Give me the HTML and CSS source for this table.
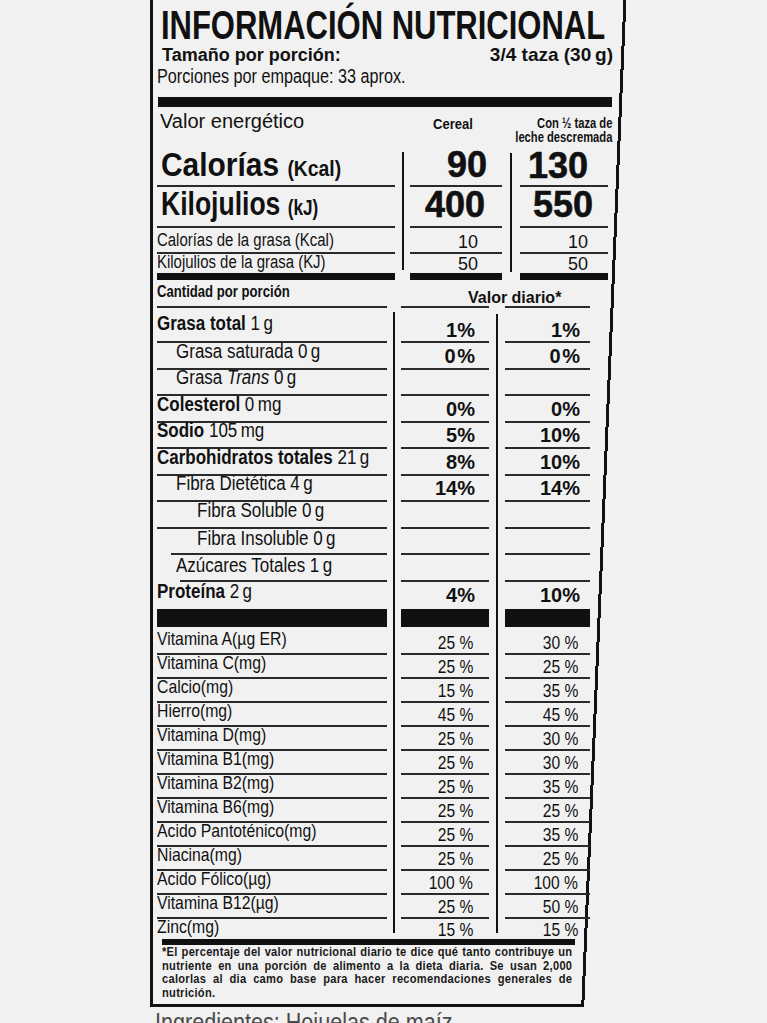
FILE: index.html
```html
<!DOCTYPE html>
<html lang="es">
<head>
<meta charset="utf-8">
<title>Información nutricional</title>
<link rel="stylesheet" href="styles.css">
</head>
<body>
<div class="label">
  <header class="head">
    <h1 class="title">INFORMACIÓN NUTRICIONAL</h1>
    <div class="serving"><span>Tamaño por porción:</span><span>3/4 taza (30&#8201;g)</span></div>
    <div class="servings"><span class="t">Porciones por empaque: 33 aprox.</span></div>
    <div class="bar"></div>
  </header>

  <section class="energy">
    <div class="eh-label">Valor energético</div>
    <div class="eh-c1"><span class="t">Cereal</span></div>
    <div class="eh-c2"><span class="t tr">Con ½ taza de<br>leche descremada</span></div>
    <span class="sep s1"></span>
    <span class="sep s2"></span>

    <div class="c l r-cal"><span class="t">Calorías&nbsp;<small>(Kcal)</small></span></div>
    <div class="c v1 r-cal num">90</div>
    <div class="c v2 r-cal num">130</div>

    <div class="c l r-kj"><span class="t">Kilojulios&nbsp;<small>(kJ)</small></span></div>
    <div class="c v1 r-kj num">400</div>
    <div class="c v2 r-kj num">550</div>

    <div class="c l r-cg"><span class="t">Calorías de la grasa (Kcal)</span></div>
    <div class="c v1 r-cg sm">10</div>
    <div class="c v2 r-cg sm">10</div>

    <div class="c l r-kg"><span class="t">Kilojulios de la grasa (KJ)</span></div>
    <div class="c v1 r-kg sm">50</div>
    <div class="c v2 r-kg sm">50</div>
  </section>

  <section class="nutrients">
    <span class="sep s1"></span>
    <span class="sep s2"></span>

    <div class="c l hd"><span class="t">Cantidad por porción</span></div>
    <div class="c v1 hd dv"><span>Valor diario*</span></div>
    <div class="c v2 hd"></div>

    <div class="c l nu first"><span class="t"><b>Grasa total</b> 1&#8201;g</span></div>
    <div class="c v1 nu pct first">1%</div>
    <div class="c v2 nu pct first">1%</div>

    <div class="c l nu in1"><span class="t">Grasa saturada 0&#8201;g</span></div>
    <div class="c v1 nu pct">0&#8202;%</div>
    <div class="c v2 nu pct">0&#8202;%</div>

    <div class="c l nu in1"><span class="t">Grasa <i>Trans</i> 0&#8201;g</span></div>
    <div class="c v1 nu pct"></div>
    <div class="c v2 nu pct"></div>

    <div class="c l nu"><span class="t"><b>Colesterol</b> 0&#8201;mg</span></div>
    <div class="c v1 nu pct">0%</div>
    <div class="c v2 nu pct">0%</div>

    <div class="c l nu"><span class="t"><b>Sodio</b> 105&#8201;mg</span></div>
    <div class="c v1 nu pct">5%</div>
    <div class="c v2 nu pct">10%</div>

    <div class="c l nu"><span class="t"><b>Carbohidratos totales</b> 21&#8201;g</span></div>
    <div class="c v1 nu pct">8%</div>
    <div class="c v2 nu pct">10%</div>

    <div class="c l nu in1"><span class="t">Fibra Dietética 4&#8201;g</span></div>
    <div class="c v1 nu pct">14%</div>
    <div class="c v2 nu pct">14%</div>

    <div class="c l nu in2"><span class="t">Fibra Soluble 0&#8201;g</span></div>
    <div class="c v1 nu pct"></div>
    <div class="c v2 nu pct"></div>

    <div class="c l nu in2 ln-short"><span class="t">Fibra Insoluble 0&#8201;g</span></div>
    <div class="c v1 nu pct"></div>
    <div class="c v2 nu pct"></div>

    <div class="c l nu in1 ln-short2"><span class="t">Azúcares Totales 1&#8201;g</span></div>
    <div class="c v1 nu pct"></div>
    <div class="c v2 nu pct"></div>

    <div class="c l nu prot"><span class="t"><b>Proteína</b> 2&#8201;g</span></div>
    <div class="c v1 nu pct prot">4%</div>
    <div class="c v2 nu pct prot">10%</div>

    <div class="c l vi"><span class="t">Vitamina A(µg ER)</span></div>
    <div class="c v1 vi vp"><span class="t tr">25 %</span></div>
    <div class="c v2 vi vp"><span class="t tr">30 %</span></div>

    <div class="c l vi"><span class="t">Vitamina C(mg)</span></div>
    <div class="c v1 vi vp"><span class="t tr">25 %</span></div>
    <div class="c v2 vi vp"><span class="t tr">25 %</span></div>

    <div class="c l vi"><span class="t">Calcio(mg)</span></div>
    <div class="c v1 vi vp"><span class="t tr">15 %</span></div>
    <div class="c v2 vi vp"><span class="t tr">35 %</span></div>

    <div class="c l vi"><span class="t">Hierro(mg)</span></div>
    <div class="c v1 vi vp"><span class="t tr">45 %</span></div>
    <div class="c v2 vi vp"><span class="t tr">45 %</span></div>

    <div class="c l vi"><span class="t">Vitamina D(mg)</span></div>
    <div class="c v1 vi vp"><span class="t tr">25 %</span></div>
    <div class="c v2 vi vp"><span class="t tr">30 %</span></div>

    <div class="c l vi"><span class="t">Vitamina B1(mg)</span></div>
    <div class="c v1 vi vp"><span class="t tr">25 %</span></div>
    <div class="c v2 vi vp"><span class="t tr">30 %</span></div>

    <div class="c l vi"><span class="t">Vitamina B2(mg)</span></div>
    <div class="c v1 vi vp"><span class="t tr">25 %</span></div>
    <div class="c v2 vi vp"><span class="t tr">35 %</span></div>

    <div class="c l vi"><span class="t">Vitamina B6(mg)</span></div>
    <div class="c v1 vi vp"><span class="t tr">25 %</span></div>
    <div class="c v2 vi vp"><span class="t tr">25 %</span></div>

    <div class="c l vi"><span class="t">Acido Pantoténico(mg)</span></div>
    <div class="c v1 vi vp"><span class="t tr">25 %</span></div>
    <div class="c v2 vi vp"><span class="t tr">35 %</span></div>

    <div class="c l vi"><span class="t">Niacina(mg)</span></div>
    <div class="c v1 vi vp"><span class="t tr">25 %</span></div>
    <div class="c v2 vi vp"><span class="t tr">25 %</span></div>

    <div class="c l vi"><span class="t">Ácido Fólico(µg)</span></div>
    <div class="c v1 vi vp"><span class="t tr">100 %</span></div>
    <div class="c v2 vi vp"><span class="t tr">100 %</span></div>

    <div class="c l vi"><span class="t">Vitamina B12(µg)</span></div>
    <div class="c v1 vi vp"><span class="t tr">25 %</span></div>
    <div class="c v2 vi vp"><span class="t tr">50 %</span></div>

    <div class="c l vi last"><span class="t">Zinc(mg)</span></div>
    <div class="c v1 vi vp last"><span class="t tr">15 %</span></div>
    <div class="c v2 vi vp last"><span class="t tr">15 %</span></div>
  </section>

  <div class="bar-foot"></div>
  <p class="foot">*El percentaje del valor nutricional diario te dice qué tanto contribuye un nutriente en una porción de alimento a la dieta diaria. Se usan 2,000 calorlas al dia camo base para hacer recomendaciones generales de nutrición.</p>
  <div class="rule-bottom"></div>
</div>
<div class="ingredients"><span class="t">Ingredientes: Hojuelas de maíz</span></div>
</body>
</html>
```

FILE: styles.css
```css
* { box-sizing: border-box; margin: 0; padding: 0; }

html, body { background: #f1f1f1; }

body {
  margin: 0;
  color: #111;
  font-family: "Liberation Sans", Arial, sans-serif;
  overflow: hidden;
}

/* condensed text: Helvetica-condensed look from Liberation Sans */
.t {
  display: inline-block;
  transform-origin: 0 100%;
  transform: scaleX(var(--sx, 0.84));
}
.t.tr { transform-origin: 100% 100%; text-align: right; }

.label {
  margin-left: 150px;
  width: 482px;
  border-left: 3px solid #111;
  padding: 5px 0 0 4px;
  background-image: linear-gradient(92.4deg, transparent 470px, #111 470px, #111 473px, transparent 473px);
}

/* ---------- header ---------- */
.head { width: 456px; }

.title {
  font-weight: 700;
  font-size: 40px;
  line-height: 40px;
  padding-left: 5px;
  white-space: nowrap;
  transform-origin: 0 100%;
  transform: scaleX(0.775);
}

.serving {
  display: flex;
  justify-content: space-between;
  font-weight: 700;
  font-size: 18px;
  line-height: 20px;
  padding-left: 5px;
}
.serving span:last-child { font-size: 19px; }

.servings {
  font-size: 20px;
  line-height: 22px;
  white-space: nowrap;
  --sx: 0.81;
}

.bar {
  margin: 10px 0 0 1px;
  width: 454px;
  height: 10px;
  background: #111;
}

/* ---------- energy grid ---------- */
.energy {
  display: grid;
  width: 451px;
  grid-template-columns: 238px 15px 92px 18px 88px;
  grid-template-rows: 38px 42px 41px 26px 26px;
}

.sep {
  width: 2px;
  background: #111;
  justify-self: center;
}
.energy .s1 { grid-column: 2; grid-row: 2 / 6; margin: 7px 0 10px; }
.energy .s2 { grid-column: 4; grid-row: 2 / 6; margin: 8px 0 8px; }

.eh-label {
  grid-column: 1;
  font-size: 20px;
  line-height: 22px;
  padding: 3px 0 0 3px;
}
.eh-c1 {
  grid-column: 3;
  font-weight: 700;
  font-size: 15px;
  line-height: 16px;
  padding: 9px 0 0 23px;
  --sx: 0.87;
}
.eh-c2 {
  grid-column: 5;
  display: flex;
  justify-content: flex-end;
  align-items: flex-start;
  font-weight: 700;
  font-size: 14px;
  line-height: 14px;
  padding-top: 9px;
  margin-right: -4px;
  white-space: nowrap;
  --sx: 0.8;
}

.c {
  display: flex;
  align-items: flex-end;
  border-bottom: 2px solid #2a2a2a;
  white-space: nowrap;
}
.l { grid-column: 1; }
.v1 { grid-column: 3; justify-content: flex-end; }
.v2 { grid-column: 5; justify-content: flex-end; }

.r-cal, .r-kj {
  font-weight: 700;
  font-size: 34px;
  line-height: 34px;
}
.r-cal small, .r-kj small {
  font-size: 22px;
  line-height: 22px;
}
.r-cal.l { padding: 0 0 4px 4px; --sx: 0.88; }
.r-kj.l { padding: 0 0 6px 4px; --sx: 0.78; }

.num {
  font-size: 36px;
  line-height: 36px;
  -webkit-text-stroke: 0.6px #111;
}
.r-cal.v1 { padding: 0 15px 2px 0; }
.r-cal.v2 { padding: 0 20px 1px 0; }
.r-kj.v1 { padding: 0 17px 3px 0; }
.r-kj.v2 { padding: 0 15px 3px 0; }

.r-cg, .r-kg {
  font-size: 18px;
  line-height: 18px;
}
.r-cg.l { padding-bottom: 3px; --sx: 0.83; }
.r-kg.l { padding-bottom: 2px; --sx: 0.83; }
.r-kg { border-bottom-width: 7px; border-bottom-color: #111; }
.r-cg.v1 { padding: 0 24px 1px 0; }
.r-cg.v2 { padding: 0 20px 1px 0; }
.r-kg.v1 { padding: 0 24px 0 0; }
.r-kg.v2 { padding: 0 20px 0 0; }

/* ---------- nutrients grid ---------- */
.nutrients {
  display: grid;
  width: 433px;
  grid-template-columns: 230px 14px 88px 16px 85px;
  grid-template-rows: 28px 35px repeat(9, 26.5px) 45.5px 28px repeat(11, 24px) 20px;
}
.nutrients .s1 { grid-column: 2; grid-row: 2 / -1; margin: 4px 0 6px; }
.nutrients .s2 { grid-column: 4; grid-row: 2 / -1; margin: 6px 0 6px; }

.hd.l {
  font-weight: 700;
  font-size: 16px;
  line-height: 16px;
  padding-bottom: 6px;
  --sx: 0.82;
}
.dv {
  justify-content: flex-start;
  overflow: visible;
}
.dv span {
  font-weight: 700;
  font-size: 16px;
  line-height: 16px;
  padding-left: 67px;
}

.nu.l {
  font-size: 20px;
  line-height: 20px;
  padding-bottom: 7px;
  --sx: 0.85;
}
.nu.l.first { padding-bottom: 8px; }
.nu b { font-weight: 700; }
.in1 { padding-left: 19px; }
.in2 { padding-left: 40px; }
.ln-short { border-bottom: none; background: linear-gradient(#2a2a2a, #2a2a2a) 14px 100% / 216px 2px no-repeat; }
.ln-short2 { border-bottom: none; background: linear-gradient(#2a2a2a, #2a2a2a) 23px 100% / 207px 2px no-repeat; }

.pct {
  font-weight: 700;
  font-size: 20px;
  line-height: 20px;
  padding-bottom: 2px;
}
.pct.first { padding-bottom: 1px; }
.v1.pct { padding-right: 14px; }
.v2.pct { padding-right: 10px; }

.prot { border-bottom: 18px solid #111; }
.nu.l.prot { padding-bottom: 8px; }
.pct.prot { padding-bottom: 4px; }

.vi.l {
  font-size: 19px;
  line-height: 19px;
  padding-bottom: 5px;
  --sx: 0.83;
}
.vp {
  font-size: 19px;
  line-height: 19px;
  padding-bottom: 1px;
  --sx: 0.82;
}
.v1.vp { padding-right: 16px; }
.v2.vp { padding-right: 12px; }
.last { border-bottom: none; }
.vi.l.last { padding-bottom: 3px; }
.vp.last { padding-bottom: 0; }

/* ---------- footnote ---------- */
.bar-foot {
  margin-left: 5px;
  width: 413px;
  height: 6px;
  background: #111;
}

.foot {
  margin: 1px 0 0 5px;
  width: 461px;
  font-weight: 700;
  font-size: 12.5px;
  line-height: 13.5px;
  letter-spacing: 0.3px;
  text-align: justify;
  color: #1a1a1a;
  transform-origin: 0 0;
  transform: scaleX(0.89);
}

.rule-bottom {
  margin: 4px 0 0 -4px;
  width: 431px;
  height: 3px;
  background: #111;
}

.ingredients {
  margin-left: 153px;
  padding-left: 2px;
  font-size: 26px;
  line-height: 30px;
  color: #4a4a4a;
  white-space: nowrap;
  --sx: 0.83;
}
```
